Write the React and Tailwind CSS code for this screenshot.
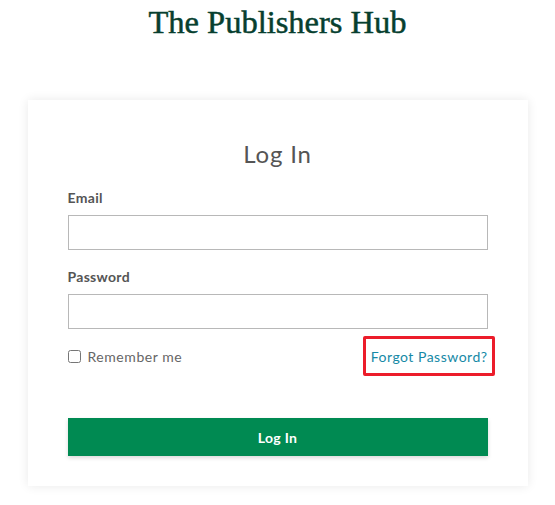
const App = () => {
  return (
    <div className="min-h-screen bg-white font-['Lato',sans-serif]">
      {/* Brand */}
      <h1 className="pt-1 text-center font-['Liberation_Serif',serif] text-[32.5px] leading-[36px] text-[#073f2f] [-webkit-text-stroke:0.5px_#073f2f]">
        The Publishers Hub
      </h1>

      {/* Card */}
      <div className="mx-auto mt-[60px] w-[500px] bg-white px-10 pt-[39px] pb-[30px] shadow-[0_0_10px_rgba(0,0,0,0.09)]">
        <h2 className="text-center text-[24px] leading-[29px] tracking-[0.8px] text-[#555]">Log In</h2>

        <form className="mt-5 flex flex-col gap-[17px]" onSubmit={(e) => e.preventDefault()}>
          <div className="flex flex-col gap-[7px]">
            <label className="text-[14px] font-bold leading-5 tracking-[0.3px] text-[#555]">Email</label>
            <input type="email" className="h-[35px] w-full border border-[#b8b8b8] px-2 outline-none" />
          </div>
          <div className="flex flex-col gap-[7px]">
            <label className="text-[14px] font-bold leading-5 tracking-[0.3px] text-[#555]">Password</label>
            <input type="password" className="h-[35px] w-full border border-[#b8b8b8] px-2 outline-none" />
          </div>

          <div className="flex h-5 items-center justify-between">
            <label className="flex items-center gap-[7px] text-[14px] tracking-[0.55px] text-[#666]">
              <input type="checkbox" className="m-0 h-[13px] w-[13px]" />
              Remember me
            </label>
            <a href="#" className="relative text-[14px] tracking-[0.5px] text-[#1689a6]">
              Forgot Password?
              {/* annotation box */}
              <span className="pointer-events-none absolute -top-[10px] -bottom-[9px] -left-[8px] -right-[7px] rounded-[2px] border-[3px] border-[#ec1c2a]" />
            </a>
          </div>

          <button
            type="submit"
            className="mt-[35px] h-[38px] w-full bg-[#008a52] text-[14px] font-bold tracking-[0.3px] text-white shadow-[0_2px_4px_rgba(0,0,0,0.15)]"
          >
            Log In
          </button>
        </form>
      </div>
    </div>
  );
};

export default App;
